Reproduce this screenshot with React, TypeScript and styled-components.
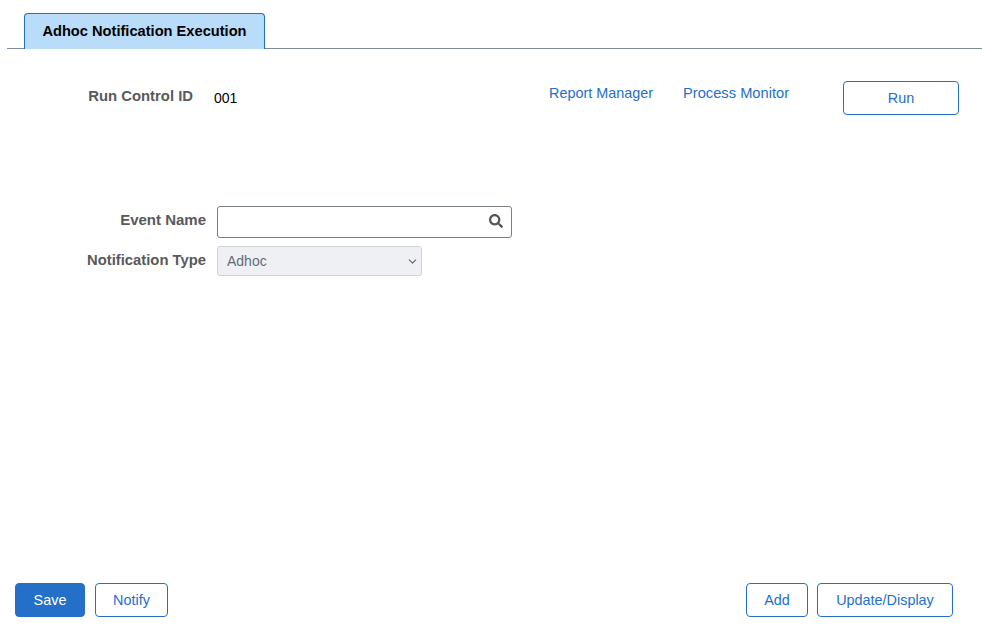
import React from "react";
import styled, { createGlobalStyle } from "styled-components";
import { FaSearch } from "react-icons/fa";
import { LuChevronDown } from "react-icons/lu";

const Global = createGlobalStyle`
  html, body { margin: 0; padding: 0; background: #fff; }
  body { font-family: "Liberation Sans", Arial, sans-serif; font-size: 14px; }
`;

const Page = styled.div`
  width: 982px;
  height: 642px;
  display: flex;
  flex-direction: column;
  overflow: hidden;
`;

const TabBar = styled.div`
  margin: 13px 0 0 7px;
  padding-left: 17px;
  height: 36px;
  box-sizing: border-box;
  border-bottom: 1px solid #7f8b99;
  display: flex;
`;

const Tab = styled.div`
  width: 241px;
  height: 36px;
  box-sizing: border-box;
  background: #b9dcfb;
  border: 1px solid #2470c8;
  border-bottom: none;
  border-radius: 4px 4px 0 0;
  color: #000;
  font-weight: 700;
  font-size: 14.65px;
  line-height: 34px;
  text-align: center;
`;

const TopRow = styled.div`
  margin-top: 32px;
  padding-right: 23px;
  height: 34px;
  display: flex;
  align-items: flex-start;
`;

const RunControlLabel = styled.span`
  width: 193px;
  text-align: right;
  color: #58595b;
  font-weight: 700;
  font-size: 14.85px;
  line-height: 16px;
  margin-top: 7px;
`;

const RunControlValue = styled.span`
  margin: 9px 0 0 21px;
  width: 335px;
  color: #000;
  font-size: 14px;
  line-height: 16px;
`;

const TopLink = styled.a<{ $size: number }>`
  color: #2470c8;
  font-size: ${(p) => p.$size}px;
  line-height: 16px;
  margin-top: 4px;
  text-decoration: none;
  cursor: pointer;
`;

const LinkGap = styled.span`
  width: 30px;
`;

const RunSlot = styled.div`
  margin-left: auto;
`;

const Form = styled.div`
  margin-top: 91px;
  display: flex;
  flex-direction: column;
  gap: 8px;
`;

const FormRow = styled.div`
  display: flex;
  gap: 11px;
  align-items: flex-start;
`;

const FieldLabel = styled.label<{ $top: number; $size: number }>`
  width: 206px;
  text-align: right;
  color: #58595b;
  font-weight: 700;
  font-size: ${(p) => p.$size}px;
  line-height: 16px;
  margin-top: ${(p) => p.$top}px;
`;

const InputWrap = styled.div`
  position: relative;
  width: 295px;
  height: 32px;
`;

const TextInput = styled.input`
  width: 100%;
  height: 100%;
  box-sizing: border-box;
  border: 1px solid #7a7f85;
  border-radius: 3px;
  background: #fff;
  outline: none;
  padding: 0 30px 0 9px;
  font: 14px "Liberation Sans", Arial, sans-serif;
`;

const SearchIcon = styled(FaSearch)`
  position: absolute;
  right: 9px;
  top: 8px;
  width: 14px;
  height: 14px;
  color: #555;
`;

const SelectWrap = styled.div`
  position: relative;
  width: 205px;
  height: 30px;
`;

const Select = styled.select`
  appearance: none;
  width: 100%;
  height: 100%;
  box-sizing: border-box;
  border: 1px solid #cfd3d8;
  border-radius: 3px;
  background: #eff0f4;
  color: #666c76;
  opacity: 1;
  padding: 0 24px 0 9px;
  font: 14px "Liberation Sans", Arial, sans-serif;
`;

const Chevron = styled(LuChevronDown)`
  position: absolute;
  right: 3px;
  top: 9px;
  width: 13px;
  height: 13px;
  color: #5f6670;
`;

const Spacer = styled.div`
  flex: 1;
`;

const Footer = styled.div`
  margin-bottom: 25px;
  padding: 0 29px 0 15px;
  display: flex;
  gap: 10px;
`;

const FooterGap = styled.div`
  flex: 1;
`;

const Button = styled.button<{ $w: number; $primary?: boolean }>`
  width: ${(p) => p.$w}px;
  height: 34px;
  box-sizing: border-box;
  padding: 0;
  border: 1px solid #2470c8;
  border-radius: 4px;
  background: ${(p) => (p.$primary ? "#2470c8" : "#fff")};
  color: ${(p) => (p.$primary ? "#fff" : "#2470c8")};
  font: 14.4px "Liberation Sans", Arial, sans-serif;
  cursor: pointer;
`;

const TightButton = styled(Button)`
  margin-left: -1px;
`;

export default function App() {
  return (
    <Page>
      <Global />
      <TabBar>
        <Tab>Adhoc Notification Execution</Tab>
      </TabBar>
      <TopRow>
        <RunControlLabel>Run Control ID</RunControlLabel>
        <RunControlValue>001</RunControlValue>
        <TopLink $size={14.4}>Report Manager</TopLink>
        <LinkGap />
        <TopLink $size={14.7}>Process Monitor</TopLink>
        <RunSlot>
          <Button $w={116}>Run</Button>
        </RunSlot>
      </TopRow>
      <Form>
        <FormRow>
          <FieldLabel $top={6} $size={15}>Event Name</FieldLabel>
          <InputWrap>
            <TextInput type="text" />
            <SearchIcon />
          </InputWrap>
        </FormRow>
        <FormRow>
          <FieldLabel $top={6} $size={14.8}>Notification Type</FieldLabel>
          <SelectWrap>
            <Select disabled defaultValue="Adhoc">
              <option>Adhoc</option>
            </Select>
            <Chevron />
          </SelectWrap>
        </FormRow>
      </Form>
      <Spacer />
      <Footer>
        <Button $primary $w={70}>Save</Button>
        <Button $w={73}>Notify</Button>
        <FooterGap />
        <Button $w={62}>Add</Button>
        <TightButton $w={136}>Update/Display</TightButton>
      </Footer>
    </Page>
  );
}
